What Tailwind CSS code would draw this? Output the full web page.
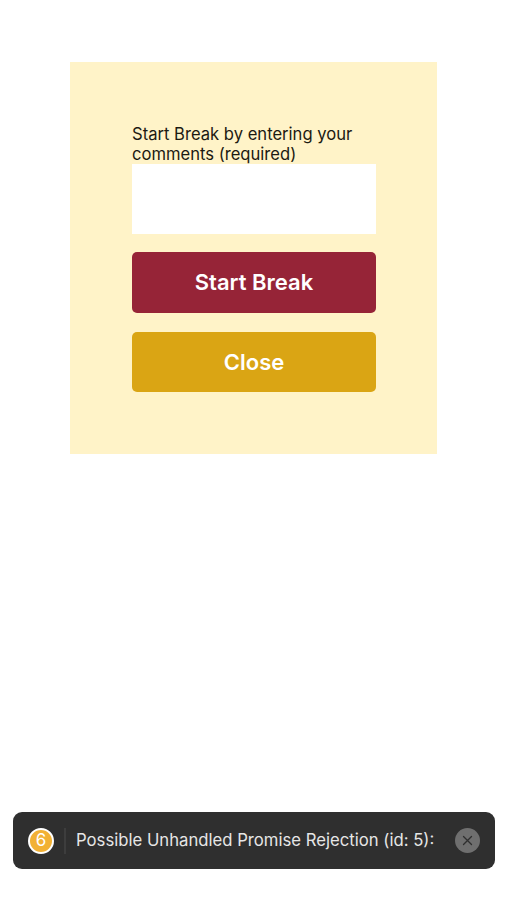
<!DOCTYPE html>
<html lang="en">
<head>
  <meta charset="UTF-8" />
  <meta name="viewport" content="width=device-width, initial-scale=1.0"/>
  <title>Start Break</title>
  <script src="https://cdn.jsdelivr.net/npm/@tailwindcss/browser@4"></script>
</head>
<body class="bg-white h-[900px] overflow-hidden relative font-['Inter',sans-serif]">
  <!-- Break panel -->
  <div class="ml-[70px] mt-[62px] w-[367px] h-[392px] bg-[#fff3c8] pt-[62px] pl-[62px] pr-[61px] inline-block align-top">
    <label class="block text-[16.6px] leading-[20px] text-[#1c1a12]">Start Break by entering your comments (required)</label>
    <div class="h-[70px] bg-white"></div>
    <button class="mt-[18px] w-full h-[61px] rounded-[5px] bg-[#962437] text-white text-[22px] font-semibold">Start Break</button>
    <button class="mt-[19px] w-full h-[60px] rounded-[5px] bg-[#daa514] text-white text-[22px] font-semibold pt-px">Close</button>
  </div>

  <!-- Warning toast -->
  <div class="absolute left-[13px] top-[812px] w-[482px] h-[57px] rounded-[9px] bg-[#2f2f2f] flex items-center pl-[15px] pr-[15px]">
    <div class="w-[26px] h-[26px] rounded-full bg-[#f2b134] border-2 border-white text-white text-[17px] flex items-center justify-center shrink-0">6</div>
    <div class="ml-[10px] w-[2px] h-[26px] bg-[#3d3d3d] shrink-0"></div>
    <span class="ml-[10px] pt-px text-[#e6e6e6] text-[16.7px] whitespace-nowrap">Possible Unhandled Promise Rejection (id: 5):</span>
    <button class="ml-auto w-[25px] h-[25px] rounded-full bg-[#6f6f6f] flex items-center justify-center shrink-0">
      <svg width="11" height="11" viewBox="0 0 11 11" fill="none" stroke="#2f2f2f" stroke-width="1.3" stroke-linecap="round"><path d="M1.5 1.5l8 8M9.5 1.5l-8 8"/></svg>
    </button>
  </div>
</body>
</html>
